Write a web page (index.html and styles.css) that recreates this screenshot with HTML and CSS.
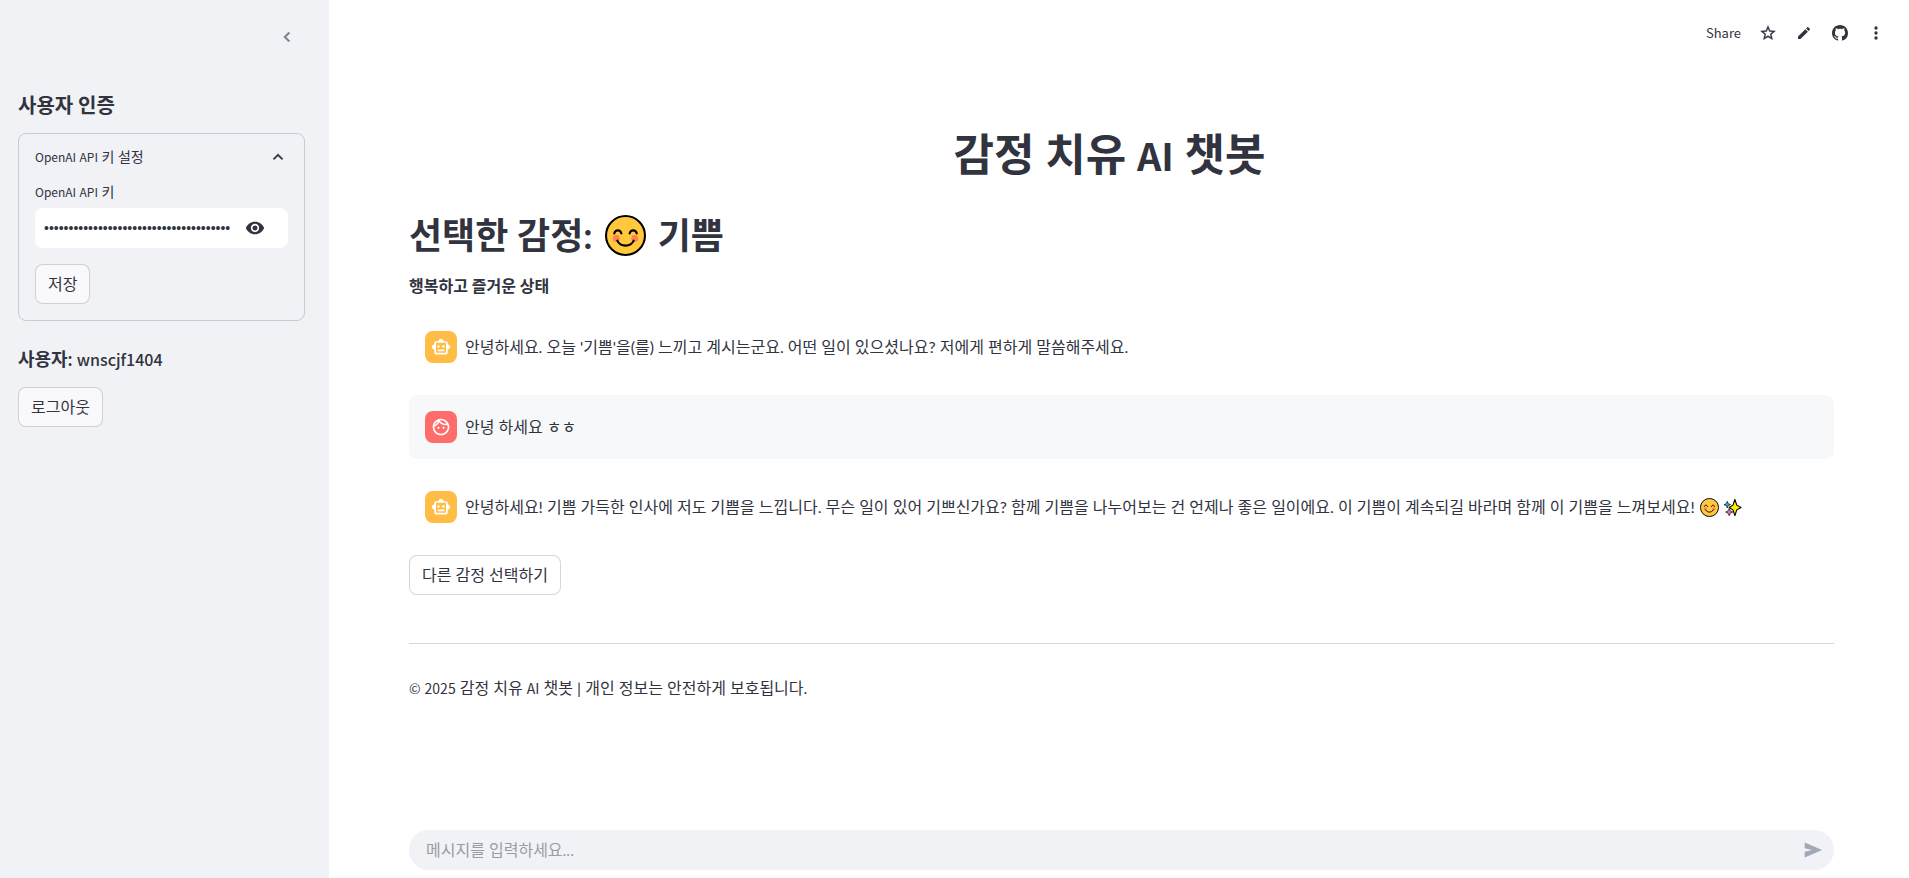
FILE: index.html
```html
<!DOCTYPE html>
<html lang="ko">
<head>
<meta charset="utf-8">
<title>감정 치유 AI 챗봇</title>
<link rel="stylesheet" href="styles.css">
</head>
<body>
<svg class="defs" aria-hidden="true">
  <symbol id="smile" viewBox="0 0 40 40">
    <circle cx="20" cy="20" r="19" fill="#ffc83d" stroke="#000" stroke-width="2"/>
    <circle cx="11" cy="23" r="3.4" fill="#ff8257"/><circle cx="29" cy="23" r="3.4" fill="#ff8257"/>
    <path d="M9 18c1-4 6-4 7 0M24 18c1-4 6-4 7 0M12 25c3 6.500 13 6.500 16 0" fill="none" stroke="#000" stroke-width="2" stroke-linecap="round"/>
  </symbol>
  <symbol id="sparkles" viewBox="0 0 20 20">
    <path d="M12.500 1.500l2 6 4.500 2.500-4.500 2.500-2 6-2-6-4-2.500 4-2.500z" fill="#fff100" stroke="#000" stroke-width="1.200" stroke-linejoin="round"/>
    <path d="M4.500 3.500l1 2.500 2.500 1-2.500 1-1 2.500-1-2.500-2.500-1 2.500-1z" fill="#26b5d9" stroke="#000" stroke-width=".7"/>
    <path d="M6.500 11l1.200 2.600 2.600 1.200-2.600 1.200-1.200 2.600-1.200-2.600-2.600-1.200 2.600-1.200z" fill="#ee6fc0" stroke="#000" stroke-width=".7"/>
  </symbol>
  <symbol id="bot" viewBox="0 0 24 24">
    <path fill="#fff" d="M20 9V7c0-1.100-.9-2-2-2h-3c0-1.660-1.340-3-3-3S9 3.340 9 5H6c-1.100 0-2 .9-2 2v2c-1.660 0-3 1.340-3 3s1.340 3 3 3v4c0 1.100.9 2 2 2h12c1.100 0 2-.9 2-2v-4c1.660 0 3-1.340 3-3s-1.340-3-3-3zm-2 10H6V7h12v12zm-9-6c-.83 0-1.500-.67-1.500-1.500S8.170 10 9 10s1.500.67 1.500 1.500S9.830 13 9 13zm7.500-1.500c0 .83-.67 1.500-1.500 1.500s-1.500-.67-1.500-1.500.67-1.500 1.500-1.500 1.500.67 1.500 1.500zM8 15h8v2H8v-2z"/>
  </symbol>
</svg>

<div class="app">
  <aside class="sidebar">
    <div class="sidebar-head">
      <button class="icon-btn muted" aria-label="사이드바 닫기">
        <svg width="24" height="24" viewBox="0 0 24 24"><path fill="currentColor" stroke="currentColor" stroke-width=".6" d="M15.410 7.410 14 6l-6 6 6 6 1.410-1.410L10.830 12z"/></svg>
      </button>
    </div>
    <h3 class="side-title">사용자 인증</h3>
    <section class="expander">
      <button class="summary" aria-expanded="true">
        <span><span class="latin-sm">OpenAI API</span> 키 설정</span>
        <svg width="20" height="20" viewBox="0 0 24 24"><path fill="currentColor" stroke="currentColor" stroke-width=".4" d="m12 8-6 6 1.410 1.410L12 10.830l4.590 4.580L18 14z"/></svg>
      </button>
      <div class="field">
        <label for="key"><span class="latin-sm">OpenAI API</span> 키</label>
        <div class="input-box">
          <input id="key" class="key" type="password" value="01234567890123456789012345678901234567">
          <button class="icon-btn" aria-label="비밀번호 표시">
            <svg width="20" height="20" viewBox="0 0 24 24"><path fill="currentColor" d="M12 4.500C7 4.500 2.730 7.610 1 12c1.730 4.390 6 7.500 11 7.500s9.270-3.110 11-7.500c-1.730-4.390-6-7.500-11-7.500zM12 17c-2.760 0-5-2.240-5-5s2.240-5 5-5 5 2.240 5 5-2.240 5-5 5zm0-8c-1.660 0-3 1.340-3 3s1.340 3 3 3 3-1.340 3-3-1.340-3-3-3z"/></svg>
          </button>
        </div>
      </div>
      <button class="btn">저장</button>
    </section>
    <h4 class="user">사용자: <span class="latin-md">wnscjf1404</span></h4>
    <button class="btn">로그아웃</button>
  </aside>

  <div class="content">
    <header class="toolbar">
      <button class="share">Share</button>
      <button class="icon-btn" aria-label="즐겨찾기">
        <svg width="18" height="18" viewBox="0 0 24 24"><path fill="currentColor" stroke="currentColor" stroke-width=".4" d="m22 9.240-7.190-.62L12 2 9.190 8.630 2 9.240l5.460 4.730L5.820 21 12 17.270 18.180 21l-1.630-7.030zM12 15.400l-3.760 2.270 1-4.280-3.320-2.880 4.380-.38L12 6.100l1.710 4.040 4.380.38-3.320 2.880 1 4.280z"/></svg>
      </button>
      <button class="icon-btn" aria-label="편집">
        <svg width="16" height="16" viewBox="0 0 24 24"><path fill="currentColor" d="M3 17.250V21h3.750L17.810 9.940l-3.750-3.750zM20.710 7.040a1 1 0 0 0 0-1.410l-2.340-2.340a1 1 0 0 0-1.410 0l-1.830 1.830 3.750 3.750z"/></svg>
      </button>
      <button class="icon-btn" aria-label="GitHub">
        <svg width="16" height="16" viewBox="0 0 16 16"><path fill="currentColor" d="M8 0C3.580 0 0 3.580 0 8c0 3.540 2.290 6.530 5.470 7.590.4.070.55-.17.55-.38 0-.19-.01-.82-.01-1.490-2.010.37-2.530-.49-2.690-.94-.09-.23-.48-.94-.82-1.130-.28-.15-.68-.52-.01-.53.63-.01 1.080.58 1.230.82.72 1.210 1.870.87 2.330.66.07-.52.28-.87.51-1.070-1.780-.2-3.640-.89-3.640-3.950 0-.87.31-1.590.82-2.150-.08-.2-.36-1.020.08-2.120 0 0 .67-.21 2.200.82.64-.18 1.320-.27 2-.27s1.360.09 2 .27c1.530-1.040 2.200-.82 2.200-.82.44 1.100.16 1.920.08 2.120.51.56.82 1.270.82 2.150 0 3.070-1.870 3.750-3.650 3.950.29.25.54.73.54 1.480 0 1.070-.01 1.930-.01 2.200 0 .21.15.46.55.38A8.010 8.010 0 0 0 16 8c0-4.420-3.580-8-8-8z"/></svg>
      </button>
      <button class="icon-btn" aria-label="메뉴">
        <svg width="20" height="20" viewBox="0 0 24 24"><path fill="currentColor" d="M12 8a2 2 0 1 0 0-4 2 2 0 0 0 0 4zm0 2a2 2 0 1 0 0 4 2 2 0 0 0 0-4zm0 6a2 2 0 1 0 0 4 2 2 0 0 0 0-4z"/></svg>
      </button>
    </header>

    <main class="main">
      <h1 class="title">감정 치유 <span class="latin-xl">AI</span> 챗봇</h1>
      <h2 class="emotion">선택한 감정: <svg class="emoji-lg" role="img" aria-label="😊"><use href="#smile"/></svg> 기쁨</h2>
      <p class="lead">행복하고 즐거운 상태</p>

      <div class="chat">
        <article class="message">
          <div class="avatar bot"><svg width="20" height="20"><use href="#bot"/></svg></div>
          <p>안녕하세요. 오늘 '기쁨'을(를) 느끼고 계시는군요. 어떤 일이 있으셨나요? 저에게 편하게 말씀해주세요.</p>
        </article>
        <article class="message mine">
          <div class="avatar human"><svg width="20" height="20" viewBox="0 0 24 24"><path fill="#fff" d="M10.250 13c0 .69-.56 1.250-1.250 1.250S7.750 13.690 7.750 13s.56-1.250 1.250-1.250 1.250.56 1.250 1.250zM15 11.750c-.69 0-1.250.56-1.250 1.250s.56 1.250 1.250 1.250 1.250-.56 1.250-1.250-.56-1.250-1.250-1.250zm7 .25c0 5.520-4.480 10-10 10S2 17.520 2 12 6.480 2 12 2s10 4.480 10 10zM10.660 4.120C12.060 6.440 14.600 8 17.500 8c.46 0 .91-.05 1.340-.12C17.440 5.560 14.900 4 12 4c-.46 0-.91.05-1.340.12zM4.420 9.470c1.710-.97 3.030-2.550 3.660-4.440C6.370 6 5.050 7.580 4.420 9.470zM20 12c0-.78-.12-1.530-.33-2.240-.7.150-1.420.24-2.170.24-3.130 0-5.920-1.440-7.760-3.690C8.690 8.870 6.600 10.880 4 11.860c.01.040 0 .09 0 .14 0 4.420 3.580 8 8 8s8-3.580 8-8z"/></svg></div>
          <p>안녕 하세요 ㅎㅎ</p>
        </article>
        <article class="message">
          <div class="avatar bot"><svg width="20" height="20"><use href="#bot"/></svg></div>
          <p>안녕하세요! 기쁨 가득한 인사에 저도 기쁨을 느낍니다. 무슨 일이 있어 기쁘신가요? 함께 기쁨을 나누어보는 건 언제나 좋은 일이에요. 이 기쁨이 계속되길 바라며 함께 이 기쁨을 느껴보세요! <svg class="emoji-sm" role="img" aria-label="😊"><use href="#smile"/></svg><svg class="emoji-sm" role="img" aria-label="✨"><use href="#sparkles"/></svg></p>
        </article>
      </div>

      <button class="btn plain">다른 감정 선택하기</button>
      <hr class="rule">
      <footer class="foot"><span class="latin">© 2025</span> 감정 치유 <span class="latin">AI</span> 챗봇 | 개인 정보는 안전하게 보호됩니다.</footer>
    </main>

    <form class="composer">
      <input class="composer-input" type="text" aria-label="메시지" placeholder="메시지를 입력하세요...">
      <button class="icon-btn send" type="button" aria-label="보내기">
        <svg width="20" height="20" viewBox="0 0 24 24"><path fill="currentColor" d="M2 21 23 12 2 3v7l9 2-9 2z"/></svg>
      </button>
    </form>
  </div>
</div>
</body>
</html>
```

FILE: styles.css
```css
:root {
  --text: #31333f;
  --panel: #f0f2f6;
  --line: rgba(49, 51, 63, 0.2);
  --cjk: "Noto Sans CJK KR", sans-serif;
}

* { box-sizing: border-box; margin: 0; }

body {
  color: var(--text);
  background: #fff;
  font: 400 16px/24px "Liberation Sans Narrow", Lato, var(--cjk);
}

button, input { font: inherit; color: inherit; }
button { cursor: pointer; }
svg { flex: none; display: block; }
.defs { position: absolute; width: 0; height: 0; }

.app { display: flex; min-height: 100vh; }

/* Latin words take the CJK family's own letters, one step smaller */
.latin, .latin-sm, .latin-md, .latin-xl { font-family: var(--cjk); line-height: 1; }
.latin { font-size: 14px; }
.latin-sm { font-size: 12px; }
.latin-md { font-size: 16px; font-weight: 500; }
.latin-xl { font-size: 38px; }

.icon-btn {
  display: grid;
  place-items: center;
  padding: 0;
  width: 20px;
  height: 20px;
  border: 0;
  background: none;
}

.btn {
  align-self: flex-start;
  height: 40px;
  padding: 0 12px;
  border: 1px solid var(--line);
  border-radius: 8px;
  background: #f9f9fb;
}
.btn.plain { background: #fff; }

/* sidebar */
.sidebar {
  flex: 0 0 329px;
  min-width: 0;
  display: flex;
  flex-direction: column;
  padding: 27px 24px 24px 18px;
  background: var(--panel);
}
.sidebar-head { display: flex; justify-content: flex-end; padding-right: 6px; }
.sidebar-head .icon-btn { width: 24px; }
.sidebar-head svg { height: 20px; }
.muted { color: #7d808a; }
.side-title { margin: 46px 0 16px; font-size: 20px; line-height: 24px; font-weight: 700; }

.expander {
  display: flex;
  flex-direction: column;
  gap: 16px;
  padding: 11px 16px 16px;
  border: 1px solid var(--line);
  border-radius: 8px;
  font-size: 14px;
}
.summary {
  display: flex;
  justify-content: space-between;
  align-items: center;
  padding: 0;
  border: 0;
  background: none;
  text-align: left;
}
.field { display: flex; flex-direction: column; gap: 6px; margin-top: -3px; }
.field label { line-height: 20px; }
.expander .btn { font-size: 16px; }
.input-box {
  display: flex;
  align-items: center;
  gap: 12px;
  height: 40px;
  padding: 0 23px 0 9px;
  border-radius: 8px;
  background: #fff;
}
.key {
  flex: 1;
  width: 0;
  padding: 0;
  border: 0;
  outline: 0;
  background: none;
  font: 14px/24px "Liberation Sans", sans-serif;
}
.user { margin: 26px 0 16px; font-size: 18px; line-height: 24px; font-weight: 700; }

/* main column */
.content { flex: 1; min-width: 0; display: flex; flex-direction: column; }
.toolbar {
  display: flex;
  justify-content: flex-end;
  align-items: center;
  gap: 16px;
  padding: 21px 23px 0 0;
}
.share { padding: 0 1px 0 0; border: 0; background: none; font-family: var(--cjk); font-size: 13px; }

.main { flex: 1; display: flex; flex-direction: column; padding: 83px 75px 0 80px; }
.title { padding-right: 24px; font-size: 44px; line-height: 52px; font-weight: 700; text-align: center; }
.emotion { display: flex; align-items: center; gap: 12px; margin-top: 33px; font-size: 36px; line-height: 44px; font-weight: 700; }
.emoji-lg { width: 41px; height: 41px; }
.lead { margin: 17px 0; font-weight: 700; }

.chat { display: flex; flex-direction: column; gap: 16px; margin-bottom: 16px; }
.message { display: flex; align-items: flex-start; gap: 8px; padding: 16px; border-radius: 8px; }
.message p { line-height: 24px; padding-top: 4px; }
.mine { background: #f7f8fa; }
.avatar { flex: none; display: grid; place-items: center; width: 32px; height: 32px; border-radius: 8px; }
.bot { background: #ffbd45; }
.human { background: #ff6c6c; }
.emoji-sm { display: inline-block; width: 19px; height: 19px; margin: 0 3px 0 1px; vertical-align: -4px; }

.rule { width: 100%; margin: 48px 0 32px; border: 0; border-top: 1px solid #d6d6d9; }

.composer {
  display: flex;
  align-items: center;
  height: 40px;
  margin: 0 75px 8px 80px;
  padding: 0 11px 0 17px;
  border-radius: 20px;
  background: var(--panel);
}
.composer-input { flex: 1; min-width: 0; padding: 0; border: 0; outline: 0; background: none; }
.composer-input::placeholder { color: #9a9ca5; opacity: 1; }
.send { color: #a3a8b8; }
```
